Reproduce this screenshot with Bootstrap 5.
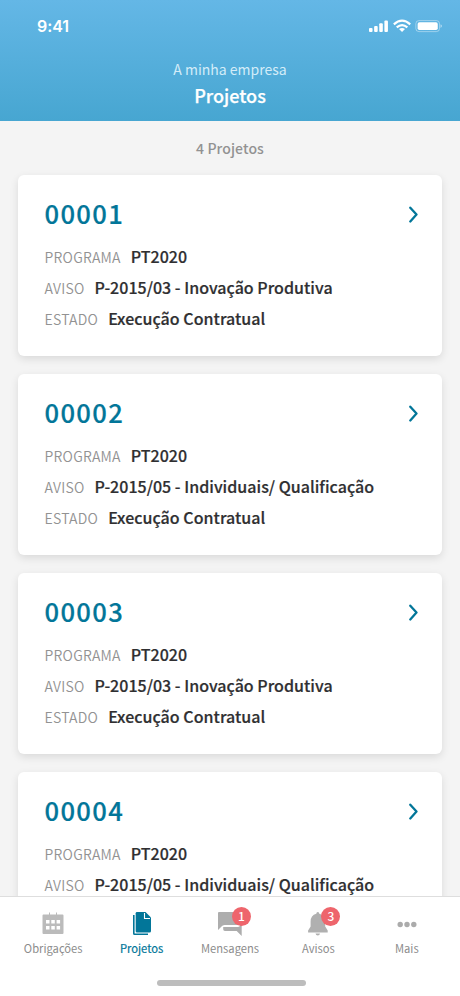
<!DOCTYPE html>
<html lang="pt">
<head>
<meta charset="utf-8">
<meta name="viewport" content="width=device-width, initial-scale=1">
<title>Projetos</title>
<link href="https://cdn.jsdelivr.net/npm/bootstrap@5.3.0/dist/css/bootstrap.min.css" rel="stylesheet">
<style>
body{font-family:"Noto Sans CJK SC","Noto Sans",sans-serif;background:#f4f4f4;color:#2f2f31;height:996px}
svg{display:block}
.app{height:996px}
.top{height:121px;background:linear-gradient(#64b7e6,#47a6d1)}
.status{height:52px;padding:0 18px 1px 37px}
.clock{font:600 16px/1 Inter,sans-serif;letter-spacing:-.1px}
.company{font-size:14px;line-height:20px;margin-top:7px;color:#d3ecf8}
.title{font-size:18px;line-height:26px;margin-top:3px;font-weight:500;-webkit-text-stroke:.25px}
.main{min-height:0}
.count{font-size:14px;line-height:20px;padding:16.5px 0 17px;font-weight:500;color:#929292;letter-spacing:.1px}
.project{height:181px;margin:0 18px 18px;padding:22px 24.5px 0 26.6px;border:0;border-radius:6px;box-shadow:0 3px 9px rgba(0,0,0,.11);flex-shrink:0}
.number{font-size:25.6px;line-height:32px;font-weight:500;letter-spacing:1.3px;color:#027699;-webkit-text-stroke:.2px}
.chevron{margin-top:3px}
.details{padding-top:12px}
.line{height:31px;line-height:31px}
.key{font-size:14px;font-weight:350;color:#929292;letter-spacing:.23px;margin-right:10px}
.val{font-size:16px;font-weight:500;letter-spacing:.02px;-webkit-text-stroke:.2px}
.tabs{height:100px;border-top:1px solid #dedede;padding:0 9px}
.tab{flex:1 1 0;font-size:11.2px;line-height:16px;color:#8c8c8c;padding-top:12px;text-decoration:none}
.tab.active{color:#027699;-webkit-text-stroke:.2px}
.tab .ico{height:31px}
.count-dot{position:absolute;left:14px;top:-2px;width:19px;height:19px;border-radius:50%;background:#ee656c;color:#fff;font-size:12px;line-height:18px;font-weight:500}
.bell .count-dot{left:13px}
.homebar{width:149px;height:6px;border-radius:3px;background:#bdbdbd;margin-bottom:10px;margin-left:2px}
</style>
</head>
<body>
<div class="app d-flex flex-column overflow-hidden">
<header class="top text-white text-center flex-shrink-0">
  <div class="status d-flex justify-content-between align-items-center">
    <span class="clock">9:41</span>
    <svg width="73" height="14" viewBox="0 0 74 14" fill="#fff"><rect x="0" y="9" width="3.6" height="4" rx="1"/><rect x="5.2" y="7" width="3.6" height="6" rx="1"/><rect x="10.4" y="4.3" width="3.6" height="8.7" rx="1"/><rect x="15.6" y="1.5" width="3.6" height="11.5" rx="1"/><g fill="none" stroke="#fff" stroke-width="2.2"><path d="M25.2 5.3Q33.5-2 41.8 5.3"/><path d="M28.1 8.4Q33.5 3.7 38.9 8.4"/></g><path d="M30.5 10.1Q33.5 7.8 36.5 10.1L33.5 13z"/><rect x="47.5" y="1.5" width="24" height="11.2" rx="3.2" fill="none" stroke="#fff" stroke-opacity=".4"/><rect x="49.3" y="3.2" width="20.4" height="7.8" rx="1.8"/><path d="M72.5 5.2Q74 5.8 74 7.1T72.5 9z" opacity=".5"/></svg>
  </div>
  <div class="company">A minha empresa</div>
  <h1 class="title mb-0">Projetos</h1>
</header>
<main class="main flex-grow-1 overflow-hidden d-flex flex-column">
  <div class="count text-center">4 Projetos</div>
  <article class="card project">
    <div class="d-flex justify-content-between align-items-center"><span class="number">00001</span><svg class="chevron" width="10" height="17" viewBox="0 0 10 17" fill="none" stroke="#027699" stroke-width="2.3" stroke-linecap="round" stroke-linejoin="round"><path d="M2.3 1.7 8.5 8.6 2.3 15.5"/></svg></div>
    <div class="details">
      <div class="line"><span class="key">PROGRAMA</span><span class="val">PT2020</span></div>
      <div class="line"><span class="key">AVISO</span><span class="val">P-2015/03 - Inovação Produtiva</span></div>
      <div class="line"><span class="key">ESTADO</span><span class="val">Execução Contratual</span></div>
    </div>
  </article>
  <article class="card project">
    <div class="d-flex justify-content-between align-items-center"><span class="number">00002</span><svg class="chevron" width="10" height="17" viewBox="0 0 10 17" fill="none" stroke="#027699" stroke-width="2.3" stroke-linecap="round" stroke-linejoin="round"><path d="M2.3 1.7 8.5 8.6 2.3 15.5"/></svg></div>
    <div class="details">
      <div class="line"><span class="key">PROGRAMA</span><span class="val">PT2020</span></div>
      <div class="line"><span class="key">AVISO</span><span class="val">P-2015/05 - Individuais/ Qualificação</span></div>
      <div class="line"><span class="key">ESTADO</span><span class="val">Execução Contratual</span></div>
    </div>
  </article>
  <article class="card project">
    <div class="d-flex justify-content-between align-items-center"><span class="number">00003</span><svg class="chevron" width="10" height="17" viewBox="0 0 10 17" fill="none" stroke="#027699" stroke-width="2.3" stroke-linecap="round" stroke-linejoin="round"><path d="M2.3 1.7 8.5 8.6 2.3 15.5"/></svg></div>
    <div class="details">
      <div class="line"><span class="key">PROGRAMA</span><span class="val">PT2020</span></div>
      <div class="line"><span class="key">AVISO</span><span class="val">P-2015/03 - Inovação Produtiva</span></div>
      <div class="line"><span class="key">ESTADO</span><span class="val">Execução Contratual</span></div>
    </div>
  </article>
  <article class="card project">
    <div class="d-flex justify-content-between align-items-center"><span class="number">00004</span><svg class="chevron" width="10" height="17" viewBox="0 0 10 17" fill="none" stroke="#027699" stroke-width="2.3" stroke-linecap="round" stroke-linejoin="round"><path d="M2.3 1.7 8.5 8.6 2.3 15.5"/></svg></div>
    <div class="details">
      <div class="line"><span class="key">PROGRAMA</span><span class="val">PT2020</span></div>
      <div class="line"><span class="key">AVISO</span><span class="val">P-2015/05 - Individuais/ Qualificação</span></div>
    </div>
  </article>
</main>
<footer class="tabs bg-white flex-shrink-0 d-flex flex-column justify-content-between">
  <nav class="d-flex text-center">
    <a class="tab" href="#"><div class="ico d-flex justify-content-center"><svg width="24" height="28" viewBox="0 0 24 28"><path fill="#bbb" fill-rule="evenodd" d="M2.500 5.500h19q1 0 1 1V24q0 1-1 1h-19q-1 0-1-1V6.500q0-1 1-1zM5 11v3.500h3.500V11zm5.300 0v3.500h3.500V11zm5.300 0v3.500h3.500V11zM5 17v3.500h3.500V17zm5.300 0v3.500h3.500V17zm5.300 0v3.500h3.500V17z"/><path stroke="#bbb" stroke-width="1" d="M8.500 3.500v3M15.500 3.500v3"/></svg></div>Obrigações</a>
    <a class="tab active" href="#"><div class="ico d-flex justify-content-center"><svg width="22" height="28" viewBox="0 0 22 28"><path fill="#027699" d="M6 3h8.500l5.500 5.500V22q0 1.500-1.500 1.500H6q-1.300 0-1.300-1.300v-18Q4.700 3 6 3z"/><path fill="none" stroke="#fff" stroke-width="1.100" d="M13.500 4v5.500H19"/><path fill="#027699" d="M2 6h1.600v18.400H17V26H3.500Q2 26 2 24.500z"/></svg></div>Projetos</a>
    <a class="tab" href="#"><div class="ico d-flex justify-content-center"><div class="position-relative"><svg width="24" height="28" viewBox="0 0 24 28" fill="#adadad"><path d="M1 3h18q1.500 0 1.500 1.500V16H6.500q-2 0-3 1.500L0 21V4q0-1 1-1z"/><path d="M22 8q1.700 0 1.700 1.700V27l-5-5H7q-1.800 0-1.800-1.800V18H20q2 0 2-2z"/></svg><span class="count-dot">1</span></div></div>Mensagens</a>
    <a class="tab" href="#"><div class="ico d-flex justify-content-center"><div class="bell position-relative"><svg width="20" height="28" viewBox="0 0 20 28" fill="#b0b0b0"><path d="M9.800 3q1.500 0 1.500 1.700 5.900 1.500 5.900 7.800v5l2.500 4v2H.1v-2l2.500-4v-5q0-6.300 5.700-7.800Q8.300 3 9.800 3zM7.500 24.500H12q-.3 2-2.200 2t-2.300-2z"/></svg><span class="count-dot">3</span></div></div>Avisos</a>
    <a class="tab" href="#"><div class="ico d-flex justify-content-center"><svg width="20" height="28" viewBox="0 0 20 28" fill="#ababab"><circle cx="3.200" cy="15.500" r="2.700"/><circle cx="10" cy="15.500" r="2.700"/><circle cx="16.800" cy="15.500" r="2.700"/></svg></div>Mais</a>
  </nav>
  <div class="homebar align-self-center"></div>
</footer>
</div>
<script src="https://cdn.jsdelivr.net/npm/bootstrap@5.3.0/dist/js/bootstrap.bundle.min.js"></script>
</body>
</html>
